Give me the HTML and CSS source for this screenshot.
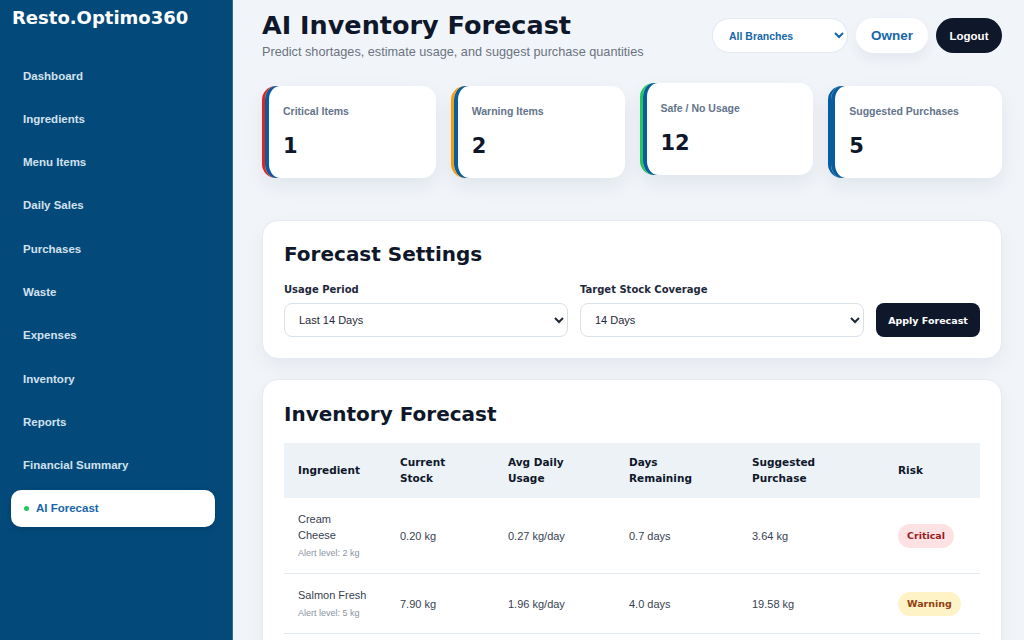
FILE: index.html
```html
<!DOCTYPE html>
<html lang="en">
<head>
<meta charset="UTF-8">
<title>AI Inventory Forecast - Resto.Optimo360</title>
<link rel="stylesheet" href="styles.css">
</head>
<body>

<aside class="sidebar">
    <div class="logo">Resto.Optimo360</div>
    <nav class="nav">
        <a href="#" class="nav-link">Dashboard</a>
        <a href="#" class="nav-link">Ingredients</a>
        <a href="#" class="nav-link">Menu Items</a>
        <a href="#" class="nav-link">Daily Sales</a>
        <a href="#" class="nav-link">Purchases</a>
        <a href="#" class="nav-link">Waste</a>
        <a href="#" class="nav-link">Expenses</a>
        <a href="#" class="nav-link">Inventory</a>
        <a href="#" class="nav-link">Reports</a>
        <a href="#" class="nav-link">Financial Summary</a>
        <a href="#" class="nav-link active"><span class="dot"></span>AI Forecast</a>
    </nav>
</aside>

<main class="main">
    <header class="topbar">
        <div>
            <h1 class="page-title">AI Inventory Forecast</h1>
            <p class="page-sub">Predict shortages, estimate usage, and suggest purchase quantities</p>
        </div>
        <div class="top-actions">
            <select class="branch-select">
                <option>All Branches</option>
            </select>
            <button class="btn-owner">Owner</button>
            <button class="btn-logout">Logout</button>
        </div>
    </header>

    <section class="stats">
        <div class="stat stat-critical">
            <div class="stat-label">Critical Items</div>
            <div class="stat-value">1</div>
        </div>
        <div class="stat stat-warning">
            <div class="stat-label">Warning Items</div>
            <div class="stat-value">2</div>
        </div>
        <div class="stat stat-safe">
            <div class="stat-label">Safe / No Usage</div>
            <div class="stat-value">12</div>
        </div>
        <div class="stat stat-purchase">
            <div class="stat-label">Suggested Purchases</div>
            <div class="stat-value">5</div>
        </div>
    </section>

    <section class="card">
        <h2 class="card-title">Forecast Settings</h2>
        <form class="settings">
            <div class="field">
                <label>Usage Period</label>
                <select>
                    <option>Last 14 Days</option>
                </select>
            </div>
            <div class="field">
                <label>Target Stock Coverage</label>
                <select>
                    <option>14 Days</option>
                </select>
            </div>
            <button type="button" class="btn-apply">Apply Forecast</button>
        </form>
    </section>

    <section class="card card-table">
        <h2 class="card-title">Inventory Forecast</h2>
        <table class="forecast">
            <thead>
                <tr>
                    <th class="c1">Ingredient</th>
                    <th class="c2">Current Stock</th>
                    <th class="c3">Avg Daily Usage</th>
                    <th class="c4">Days Remaining</th>
                    <th class="c5">Suggested Purchase</th>
                    <th class="c6">Risk</th>
                </tr>
            </thead>
            <tbody>
                <tr>
                    <td>Cream<br>Cheese<span class="alert">Alert level: 2 kg</span></td>
                    <td>0.20 kg</td>
                    <td>0.27 kg/day</td>
                    <td>0.7 days</td>
                    <td>3.64 kg</td>
                    <td><span class="badge badge-critical">Critical</span></td>
                </tr>
                <tr>
                    <td>Salmon Fresh<span class="alert">Alert level: 5 kg</span></td>
                    <td>7.90 kg</td>
                    <td>1.96 kg/day</td>
                    <td>4.0 days</td>
                    <td>19.58 kg</td>
                    <td><span class="badge badge-warning">Warning</span></td>
                </tr>
            </tbody>
        </table>
    </section>
</main>

</body>
</html>
```

FILE: styles.css
```css
* {
    box-sizing: border-box;
}

body {
    margin: 0;
    height: 100vh;
    overflow: hidden;
    display: flex;
    background-color: #f1f5fa;
    font-family: 'Liberation Sans', Arial, sans-serif;
    color: #0f172a;
}

/* Sidebar */
.sidebar {
    width: 233px;
    flex-shrink: 0;
    height: 100vh;
    background-color: #034a7b;
    border-right: 1px solid #2f6c98;
}

.logo {
    font-family: 'DejaVu Sans', sans-serif;
    font-weight: bold;
    font-size: 18px;
    color: #ffffff;
    padding: 7px 0 0 12px;
    height: 57px;
}

.nav {
    display: flex;
    flex-direction: column;
    gap: 6.3px;
}

.nav-link {
    display: flex;
    align-items: center;
    height: 37px;
    margin: 0 17px 0 11px;
    padding: 0 12px;
    border-radius: 10px;
    color: #d2e1ee;
    font-size: 11.5px;
    font-weight: bold;
    text-decoration: none;
}

.nav-link.active {
    background-color: #ffffff;
    color: #1766a9;
    box-shadow: 0 2px 6px rgba(0, 0, 0, 0.15);
}

.dot {
    width: 5px;
    height: 5px;
    border-radius: 50%;
    background-color: #22c55e;
    margin: 0 7px 0 1px;
}

/* Main */
.main {
    flex: 1;
    padding: 10px 22px 0 29px;
    overflow: hidden;
}

.topbar {
    display: flex;
    justify-content: space-between;
    align-items: flex-start;
}

.page-title {
    margin: 0;
    font-family: 'DejaVu Sans', sans-serif;
    font-size: 25.5px;
    line-height: 30px;
    color: #0f172a;
}

.page-sub {
    margin: 5px 0 0;
    font-size: 12.7px;
    color: #6b7280;
}

.top-actions {
    display: flex;
    gap: 8px;
    margin-top: 8px;
}

.branch-select {
    width: 136px;
    height: 35px;
    padding: 0 10px 0 12px;
    border: 1px solid #e2e8f0;
    border-radius: 18px;
    background-color: #ffffff;
    color: #1766a9;
    font-family: 'Liberation Sans', Arial, sans-serif;
    font-size: 10.5px;
    font-weight: bold;
}

.btn-owner,
.btn-logout {
    height: 35px;
    border: none;
    border-radius: 18px;
    font-family: 'Liberation Sans', Arial, sans-serif;
    font-weight: bold;
    cursor: pointer;
}

.btn-owner {
    width: 72px;
    background-color: #ffffff;
    color: #1766a9;
    font-size: 13.5px;
    box-shadow: 0 6px 14px rgba(15, 23, 42, 0.06);
}

.btn-logout {
    width: 66px;
    background-color: #0f172a;
    color: #ffffff;
    font-size: 11.5px;
}

/* Stat cards */
.stats {
    display: grid;
    grid-template-columns: repeat(4, 1fr);
    gap: 15px;
    margin-top: 27px;
}

.stat {
    height: 92px;
    padding: 19px 18px 0;
    background-color: #ffffff;
    border-radius: 14px;
    border-left: 3px solid #dc2626;
    box-shadow: inset 4px 0 0 #075d9e, 0 8px 20px rgba(15, 23, 42, 0.07);
}

.stat-warning {
    border-left-color: #f59e0b;
}

.stat-safe {
    border-left-color: #22c55e;
    transform: translateY(-3px);
}

.stat-purchase {
    border-left-color: #075d9e;
}

.stat-label {
    font-size: 10.5px;
    font-weight: bold;
    color: #64748b;
}

.stat-value {
    margin-top: 17px;
    font-family: 'DejaVu Sans', sans-serif;
    font-weight: bold;
    font-size: 21px;
    color: #0f172a;
}

/* Cards */
.card {
    margin-top: 20px;
    padding: 21px 21px 21px;
    background-color: #ffffff;
    border: 1px solid #e5eaf1;
    border-radius: 16px;
    box-shadow: 0 8px 20px rgba(15, 23, 42, 0.05);
}

.stats + .card {
    margin-top: 42px;
}

.card-table {
    padding-top: 22px;
}

.card-title {
    margin: 0;
    font-family: 'DejaVu Sans', sans-serif;
    font-size: 20px;
    line-height: 24px;
    color: #0f172a;
}

.settings {
    display: flex;
    align-items: flex-end;
    gap: 12px;
    margin-top: 18px;
}

.field {
    flex: 1;
    display: flex;
    flex-direction: column;
    gap: 8px;
}

.field label {
    font-family: 'DejaVu Sans', sans-serif;
    font-weight: bold;
    font-size: 10px;
    color: #1e293b;
}

.field select {
    height: 34px;
    padding: 0 10px;
    border: 1px solid #d9e1ea;
    border-radius: 8px;
    background-color: #ffffff;
    font-family: 'Liberation Sans', Arial, sans-serif;
    font-size: 11px;
    color: #1f2937;
}

.btn-apply {
    width: 104px;
    height: 34px;
    border: none;
    border-radius: 8px;
    background-color: #0f172a;
    color: #ffffff;
    font-family: 'DejaVu Sans', sans-serif;
    font-weight: bold;
    font-size: 9.5px;
    cursor: pointer;
}

/* Table */
.forecast {
    width: 100%;
    margin-top: 17px;
    border-collapse: collapse;
    table-layout: fixed;
}

.forecast th {
    background-color: #edf2f7;
    padding: 11px 14px 12px;
    text-align: left;
    font-family: 'DejaVu Sans', sans-serif;
    font-size: 10.5px;
    line-height: 16px;
    color: #0f172a;
}

.c1 { width: 102px; }
.c2 { width: 108px; }
.c3 { width: 121px; }
.c4 { width: 123px; }
.c5 { width: 146px; }

.forecast td {
    padding: 13px 14px;
    border-bottom: 1px solid #e2e8f0;
    font-size: 11px;
    line-height: 16px;
    color: #374151;
}

.alert {
    display: block;
    margin-top: 3px;
    font-size: 9px;
    line-height: 14px;
    color: #8a94a3;
}

.badge {
    display: inline-block;
    padding: 5px 9px;
    border-radius: 12px;
    font-family: 'DejaVu Sans', sans-serif;
    font-weight: bold;
    font-size: 9.5px;
    line-height: 14px;
}

.badge-critical {
    background-color: #fde2e4;
    color: #991b1b;
}

.badge-warning {
    background-color: #fef3c7;
    color: #92400e;
}
```
